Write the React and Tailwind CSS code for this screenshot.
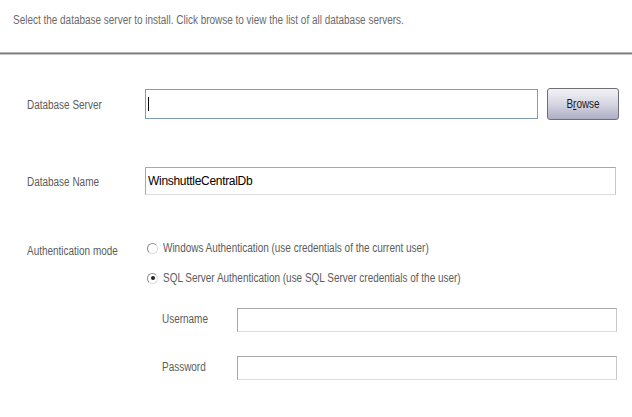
import { useState } from 'react'

const FONT = { fontFamily: '"Liberation Sans", Arial, sans-serif' }

// the reference uses a condensed face; squeeze Liberation Sans to match
function Narrow({ children, className = '' }) {
  return (
    <span className={`inline-block origin-left scale-x-[0.83] whitespace-nowrap ${className}`}>{children}</span>
  )
}

function Radio({ checked, onClick, children }) {
  return (
    <button type="button" onClick={onClick} className="flex items-center h-[14px] text-left">
      <span className="w-[11px] h-[11px] rounded-full border-[1.5px] border-t-[#8e8e8e] border-l-[#8e8e8e] border-r-[#dcdcdc] border-b-[#dcdcdc] bg-white flex items-center justify-center">
        {checked && <span className="w-[4px] h-[4px] rounded-full bg-[#222]" />}
      </span>
      <span className="ml-[5px] text-[12px] text-[#5c5c5c] leading-none">
        <Narrow>{children}</Narrow>
      </span>
    </button>
  )
}

function Field({ className = '', value, onChange, blue }) {
  return (
    <input
      value={value}
      onChange={e => onChange(e.target.value)}
      className={`bg-white outline-none px-[2px] text-[12px] tracking-[-0.3px] text-black ${
        blue
          ? 'border border-[#7f9db9]'
          : 'border border-t-[#a8a8a8] border-l-[#a8a8a8] border-r-[#c8c8c8] border-b-[#dcdcdc]'
      } ${className}`}
      style={FONT}
    />
  )
}

export default function App() {
  const [server, setServer] = useState('')
  const [dbName, setDbName] = useState('WinshuttleCentralDb')
  const [mode, setMode] = useState('sql')
  const [user, setUser] = useState('')
  const [pass, setPass] = useState('')

  return (
    <div className="w-[632px] h-[417px] bg-white overflow-hidden" style={FONT}>
      {/* Header text */}
      <div className="h-[52px] pl-[13px] pt-[13px] text-[12px] text-[#6a6a6a] leading-[14px]">
        <Narrow>Select the database server to install. Click browse to view the list of all database servers.</Narrow>
      </div>
      <div className="h-[1px] bg-[#b4b4b4]" />
      <div className="h-[1px] bg-[#7c7c7c]" />
      <div className="h-[1px] bg-[#c4c4c4]" />

      <div className="pl-[27px]">
        {/* Database server */}
        <div className="flex items-center mt-[32px] h-[33px]">
          <div className="w-[118px] text-[12px] text-[#5c5c5c] pt-[3px]"><Narrow>Database Server</Narrow></div>
          <div className="relative">
            <Field blue value={server} onChange={setServer} className="w-[393px] h-[30px] pl-[3px]" />
            {server === '' && <span className="absolute left-[3px] top-[8px] w-[1px] h-[14px] bg-black" />}
          </div>
          <button
            type="button"
            className="ml-[9px] w-[72px] h-[32px] rounded-[3px] border border-[#6e6e7a] bg-gradient-to-b from-[#f2f2f6] via-[#d6d6e2] to-[#aeaec6] text-[12px] text-[#1a1a1a] flex items-center justify-center"
          >
            <span className="inline-block scale-x-[0.83] whitespace-nowrap">
              B<span className="underline">r</span>owse
            </span>
          </button>
        </div>

        {/* Database name */}
        <div className="flex items-center mt-[47px] h-[28px]">
          <div className="w-[118px] text-[12px] text-[#5c5c5c] pt-[2px]"><Narrow>Database Name</Narrow></div>
          <Field value={dbName} onChange={setDbName} className="w-[471px] h-[28px]" />
        </div>

        {/* Authentication mode */}
        <div className="flex mt-[46px]">
          <div className="w-[120px] text-[12px] text-[#5c5c5c] leading-[14px] pt-[3px]"><Narrow>Authentication mode</Narrow></div>
          <div className="flex flex-col">
            <Radio checked={mode === 'win'} onClick={() => setMode('win')}>
              Windows Authentication (use credentials of the current user)
            </Radio>
            <div className="mt-[16px]">
              <Radio checked={mode === 'sql'} onClick={() => setMode('sql')}>
                SQL Server Authentication (use SQL Server credentials of the user)
              </Radio>
            </div>
          </div>
        </div>

        <div className="pl-[135px]">
          <div className="flex items-center mt-[23px] h-[24px]">
            <div className="w-[75px] text-[12px] text-[#5c5c5c] pb-[3px]"><Narrow>Username</Narrow></div>
            <Field value={user} onChange={setUser} className="w-[380px] h-[24px]" />
          </div>
          <div className="flex items-center mt-[24px] h-[24px]">
            <div className="w-[75px] text-[12px] text-[#5c5c5c] pb-[3px]"><Narrow>Password</Narrow></div>
            <Field value={pass} onChange={setPass} className="w-[380px] h-[24px]" />
          </div>
        </div>
      </div>
    </div>
  )
}
